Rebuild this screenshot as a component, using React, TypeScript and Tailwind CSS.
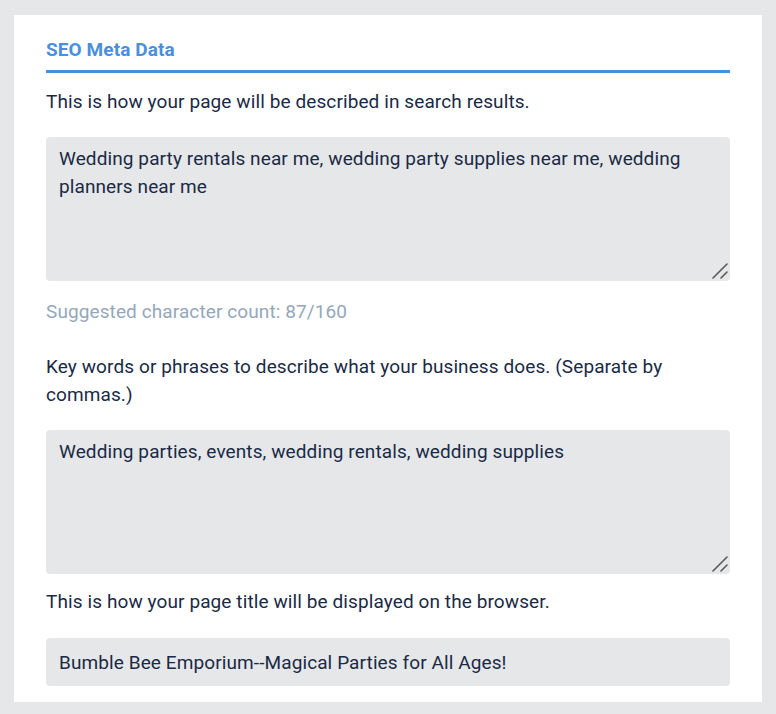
function Grip() {
  return (
    <svg
      className="pointer-events-none absolute right-[2px] bottom-[2px]"
      width="16"
      height="16"
      viewBox="0 0 16 16"
      fill="none"
      stroke="#5a5a5a"
      strokeWidth="1.6"
      strokeLinecap="round"
    >
      <path d="M1 15 L15 1" />
      <path d="M9 15 L15 9" />
    </svg>
  );
}

export default function App() {
  const field =
    'block w-full rounded-[4px] bg-[#e6e7e8] px-[13px] text-[19px] leading-[28px] tracking-[0.1px] text-[#1a2a46] outline-none';

  return (
    <div className="min-h-screen bg-[#e6e7e8] pt-[15px] pl-[14px] pr-[14px] pb-[12px] font-['Roboto',sans-serif] tracking-[0.1px]">
      <div className="bg-white px-8 pt-[23px] pb-4">
        {/* header */}
        <h2 className="border-b-[3px] border-[#4a8fdb] pb-[8px] text-[19px] font-bold leading-[24px] text-[#4a8fdb]">
          SEO Meta Data
        </h2>

        <p className="mt-[15px] text-[19px] leading-[28px] text-[#1a2a46]">
          This is how your page will be described in search results.
        </p>
        <div className="relative mt-[21px]">
          <textarea
            readOnly
            className={`${field} h-[144px] resize-none py-2`}
            defaultValue="Wedding party rentals near me, wedding party supplies near me, wedding planners near me"
          />
          <Grip />
        </div>
        <p className="mt-[17px] text-[19px] leading-[28px] text-[#95a7bb]">
          Suggested character count: 87/160
        </p>

        <p className="mt-[27px] text-[19px] leading-[28px] text-[#1a2a46]">
          Key words or phrases to describe what your business does. (Separate by commas.)
        </p>
        <div className="relative mt-[21px]">
          <textarea
            readOnly
            className={`${field} h-[144px] resize-none py-2`}
            defaultValue="Wedding parties, events, wedding rentals, wedding supplies"
          />
          <Grip />
        </div>

        <p className="mt-[14px] text-[19px] leading-[28px] text-[#1a2a46]">
          This is how your page title will be displayed on the browser.
        </p>
        <input
          readOnly
          className={`${field} mt-[22px] h-12`}
          defaultValue="Bumble Bee Emporium--Magical Parties for All Ages!"
        />
      </div>
    </div>
  );
}
